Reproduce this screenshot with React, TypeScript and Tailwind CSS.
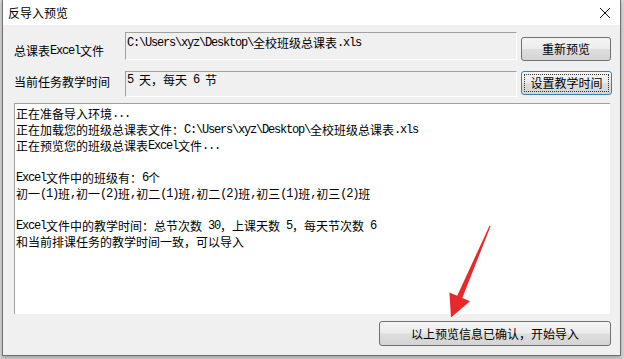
import React from 'react';

const lines = [
  '正在准备导入环境...',
  '正在加载您的班级总课表文件：C:\\Users\\xyz\\Desktop\\全校班级总课表.xls',
  '正在预览您的班级总课表Excel文件...',
  '',
  'Excel文件中的班级有：6个',
  '初一(1)班,初一(2)班,初二(1)班,初二(2)班,初三(1)班,初三(2)班',
  '',
  'Excel文件中的教学时间：总节次数 30，上课天数 5，每天节次数 6',
  '和当前排课任务的教学时间一致，可以导入',
];

// SimSun-ish text: ascii runs in a mono face squeezed to 6px per char
const Mixed: React.FC<{ text: string }> = ({ text }) => (
  <>
    {text.split(/([\x20-\x7e]+)/).filter(Boolean).map((part, i) =>
      /^[\x20-\x7e]+$/.test(part) ? (
        <span
          key={i}
          className="inline-block h-[16px] align-top font-['Liberation_Mono','Noto_Sans_CJK_SC',monospace] tracking-[-1.2px]"
        >
          {part}
        </span>
      ) : (
        <span key={i} className="inline-block h-[16px] align-top">
          {part}
        </span>
      )
    )}
  </>
);

const WinButton: React.FC<{ label: string; focused?: boolean; className?: string }> = ({ label, focused, className }) => (
  <div
    className={`rounded-[3px] border p-[2px] bg-[linear-gradient(#f4f4f4_0%,#ececec_48%,#dedede_52%,#d4d4d4_100%)] ${
      focused ? 'border-[#3c7fb1]' : 'border-[#707070]'
    } ${className ?? ''}`}
  >
    <div
      className={`flex h-full items-center justify-center text-[12px] leading-none text-black ${
        focused ? 'border border-dotted border-[#333]' : 'border border-transparent'
      }`}
    >
      {label}
    </div>
  </div>
);

export default function App() {
  return (
    <div className="relative h-[359px] w-[624px] overflow-hidden bg-[#d6d6d6] font-['Noto_Sans_CJK_SC',sans-serif] text-black">
      <div className="ml-[2px] flex h-[356px] w-[619px] flex-col border-x border-b border-[#707070] bg-[#f0f0f0] shadow-[0_2px_4px_rgba(0,0,0,0.25)]">
        {/* title bar */}
        <div className="flex h-[25px] items-center justify-between bg-white pl-[5px] pr-[8px]">
          <span className="text-[12px] leading-none">反导入预览</span>
          <svg width="12" height="12" viewBox="0 0 12 12" className="mr-[1px]">
            <path d="M1 1 L11 11 M11 1 L1 11" stroke="#111" strokeWidth="1" />
          </svg>
        </div>

        <div className="flex flex-col pl-[11px] text-[12px] leading-[16px]">
          {/* row 1 */}
          <div className="flex h-[37px] items-start">
            <div className="mt-[18px] w-[111px] whitespace-pre">
              <Mixed text="总课表Excel文件" />
            </div>
            <div className="mt-[7px] h-[28px] w-[392px] whitespace-pre border border-b-white border-l-[#a0a0a0] border-r-white border-t-[#a0a0a0] pl-[1px] pt-[2px]">
              <Mixed text="C:\Users\xyz\Desktop\全校班级总课表.xls" />
            </div>
            <WinButton label="重新预览" className="ml-[4px] mt-[12px] h-[24px] w-[90px]" />
          </div>

          {/* row 2 */}
          <div className="flex h-[41px] items-start">
            <div className="mt-[12px] w-[111px] whitespace-pre">
              <Mixed text="当前任务教学时间" />
            </div>
            <div className="mt-[9px] h-[26px] w-[392px] whitespace-pre border border-b-white border-l-[#a0a0a0] border-r-white border-t-[#a0a0a0] pl-[1px]">
              <Mixed text="5 天，每天 6 节" />
            </div>
            <WinButton label="设置教学时间" focused className="ml-[4px] mt-[9px] h-[24px] w-[91px]" />
          </div>

          {/* log */}
          <div className="h-[211px] w-[596px] border-l border-t border-l-[#a0a0a0] border-t-[#a0a0a0] bg-white pl-[1px] pt-[2px]">
            {lines.map((l, i) => (
              <div key={i} className="h-[16px] whitespace-pre">
                <Mixed text={l} />
              </div>
            ))}
          </div>

          <div className="mt-[7px] flex w-[597px] justify-end">
            <WinButton label="以上预览信息已确认，开始导入" className="h-[25px] w-[232px] border-[#8a99a6]" />
          </div>
        </div>
      </div>

      {/* red annotation arrow */}
      <svg className="pointer-events-none absolute inset-0" width="624" height="359" viewBox="0 0 624 359">
        <polygon
          points="489.5,225.8 490.6,226.3 462.3,297.9 470,301.2 451,317.5 449.4,292.4 457.2,295.7"
          fill="#e8292b"
        />
      </svg>
    </div>
  );
}
